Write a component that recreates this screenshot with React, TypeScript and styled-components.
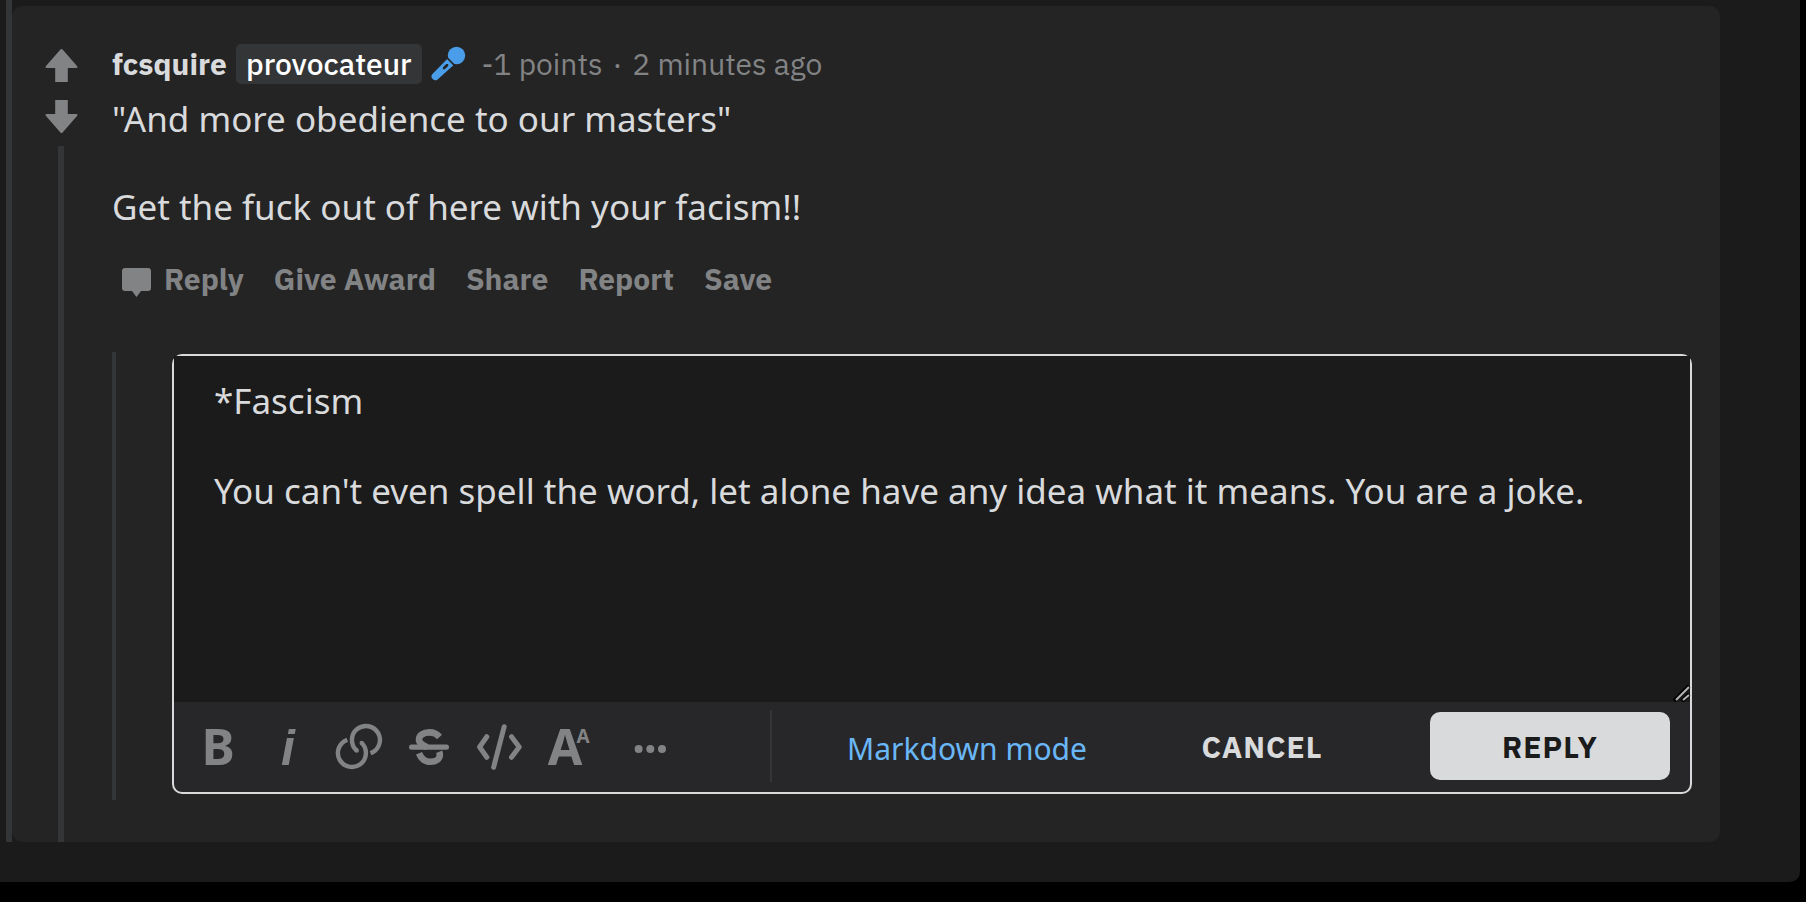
import React from 'react';
import styled, { createGlobalStyle } from 'styled-components';

const UI_FONT = '"IBM Plex Sans", Roboto, "Liberation Sans", sans-serif';
const BODY_FONT = '"Noto Sans", "Open Sans", sans-serif';

const color = {
  surface: '#1b1b1b',
  card: '#242424',
  toolbar: '#272729',
  line: '#343537',
  text: '#d9dadc',
  muted: '#828385',
  link: '#6ab7f7',
  mic: '#4a9de8',
};

const GlobalStyle = createGlobalStyle`
  * { box-sizing: border-box; }
  body { margin: 0; background: #000; color: ${color.text}; }
  button { border: 0; margin: 0; padding: 0; background: none; color: inherit; cursor: pointer; }
  svg { display: block; flex: none; overflow: visible; }
`;

const Page = styled.div`
  min-height: 100vh;
  padding: 0 6px 20px 0;
  background: #000;
`;

const Surface = styled.main`
  display: flex;
  padding: 0 80px 40px 6px;
  border-radius: 0 0 10px 0;
  background: ${color.surface};
`;

const ParentLine = styled.div`
  flex: none;
  width: 6px;
  background: ${color.line};
`;

const Comment = styled.article`
  display: flex;
  flex: 1;
  min-width: 0;
  gap: 33px;
  margin-top: 6px;
  padding: 0 28px 0 33px;
  border-radius: 10px;
  background: ${color.card};
`;

const VoteColumn = styled.div`
  display: flex;
  flex: none;
  flex-direction: column;
  align-items: center;
  gap: 18px;
  width: 34px;
  padding-top: 43px;
`;

const VoteButton = styled.button`
  color: ${color.muted};
`;

const ThreadLine = styled.div`
  flex: 1;
  width: 6px;
  margin-top: -5px;
  margin-right: 2px;
  background: ${color.line};
`;

const Content = styled.div`
  flex: 1;
  min-width: 0;
  padding: 38px 0 42px;
`;

const Header = styled.header`
  display: flex;
  align-items: center;
  gap: 9px;
  font: 400 30px/40px ${UI_FONT};
`;

const Author = styled.a`
  color: ${color.text};
  font-weight: 700;
  text-decoration: none;
`;

const Flair = styled.span`
  padding: 0 10px;
  border-radius: 5px;
  background: ${color.line};
  color: #fff;
  font-weight: 500;
`;

const Meta = styled.div`
  display: flex;
  gap: 10px;
  margin-left: 6px;
  color: ${color.muted};
`;

const Body = styled.div`
  display: flex;
  flex-direction: column;
  gap: 36px;
  margin-top: 9px;
  font: 400 35px/52px ${BODY_FONT};
`;

const Paragraph = styled.p`
  margin: 0;
`;

const Actions = styled.div`
  display: flex;
  flex-wrap: wrap;
  gap: 30px;
  margin-top: 26px;
  padding-left: 10px;
`;

const ActionButton = styled.button`
  display: flex;
  align-items: center;
  gap: 12px;
  color: ${color.muted};
  font: 700 30px/40px ${UI_FONT};
`;

const CommentGlyph = styled.svg`
  margin-top: 5px;
`;

const ReplyThread = styled.div`
  display: flex;
  gap: 56px;
  margin-top: 53px;
`;

const ReplyLine = styled.div`
  flex: none;
  width: 4px;
  background: ${color.line};
`;

const Editor = styled.form`
  flex: 1;
  min-width: 0;
  margin: 2px 0 6px;
  border: 2px solid ${color.text};
  border-radius: 10px;
  background: ${color.toolbar};
`;

const InputArea = styled.div`
  position: relative;
`;

const TextInput = styled.textarea`
  display: block;
  width: 100%;
  height: 346px;
  padding: 22px 40px;
  border: 0;
  outline: 0;
  resize: none;
  background: ${color.surface};
  color: ${color.text};
  font: 400 35px/45px ${BODY_FONT};
`;

const ResizeGrip = styled.svg`
  position: absolute;
  right: 0;
  bottom: 0;
`;

const Toolbar = styled.div`
  display: flex;
  align-items: center;
  justify-content: space-between;
  height: 90px;
  padding: 0 20px 2px 10px;
`;

const Tools = styled.div`
  display: flex;
`;

const ToolButton = styled.button<{ $spaced?: boolean }>`
  display: flex;
  align-items: center;
  justify-content: center;
  width: 70px;
  height: 68px;
  margin-left: ${(p) => (p.$spaced ? 11 : 0)}px;
  color: ${color.muted};
`;

const Submit = styled.div`
  display: flex;
  align-items: center;
`;

const Divider = styled.div`
  width: 2px;
  height: 72px;
  margin-right: 75px;
  background: ${color.line};
`;

const ModeButton = styled.button`
  padding-top: 6px;
  color: ${color.link};
  font: 400 30px/40px ${BODY_FONT};
`;

const FormButton = styled.button<{ $primary?: boolean }>`
  width: ${(p) => (p.$primary ? 240 : 200)}px;
  height: 68px;
  margin-left: ${(p) => (p.$primary ? 68 : 75)}px;
  padding-top: 2px;
  border-radius: 10px;
  background: ${(p) => (p.$primary ? color.text : 'transparent')};
  color: ${(p) => (p.$primary ? color.surface : color.text)};
  font: 700 30px/40px ${UI_FONT};
  letter-spacing: 1px;
`;

const VoteArrow = ({ down = false }: { down?: boolean }) => (
  <svg width="34" height="33" viewBox="0 0 34 33" fill="currentColor" aria-hidden="true">
    <path
      transform={down ? 'rotate(180 16.5 16.5)' : undefined}
      d="M15.4.5Q16.5-.5 17.6.5L32.2 17.3Q33.2 19 31.5 19H22.8V33H10.2V19H1.5Q-.2 19 .8 17.3Z"
    />
  </svg>
);

const MicIcon = () => (
  <svg width="36" height="36" viewBox="0 0 36 36" fill={color.mic} aria-label="Microphone" role="img">
    <circle cx="25.5" cy="9.5" r="8.7" />
    <path
      fillRule="evenodd"
      d="M16.2 13L22.4 19.2L6.6 33.4A3.8 3.8 0 0 1 1.2 28.2ZM12 21.2L11.8 23.2L13.8 23.2L17.2 20L17.2 18L15.2 18Z"
    />
    <path d="M16.5 12.2L23.5 19.2" stroke={color.card} strokeWidth="1.6" />
  </svg>
);

const CommentIcon = () => (
  <CommentGlyph width="30" height="30" viewBox="0 0 30 30" fill="currentColor" aria-hidden="true">
    <path d="M3 1H26Q29 1 29 4V21Q29 24 26 24H19L14.5 30L10 24H3Q0 24 0 21V4Q0 1 3 1Z" />
  </CommentGlyph>
);

const Icon = ({ children }: { children: React.ReactNode }) => (
  <svg width="50" height="50" viewBox="0 0 50 50" fill="currentColor" aria-hidden="true">
    {children}
  </svg>
);

const IconGlyph = styled.text`
  font-family: "Noto Sans", sans-serif;
  font-weight: 700;
  font-size: 50px;
  text-anchor: middle;
`;

const ItalicGlyph = styled(IconGlyph)`
  font-family: "Liberation Sans", sans-serif;
  font-style: italic;
`;

const SmallGlyph = styled(IconGlyph)`
  font-size: 19px;
`;

const BoldIcon = () => (
  <Icon>
    <IconGlyph x="24" y="44">B</IconGlyph>
  </Icon>
);

const ItalicIcon = () => (
  <Icon>
    <ItalicGlyph x="24" y="44">i</ItalicGlyph>
  </Icon>
);

const LinkIcon = () => (
  <Icon>
    <g fill="none" stroke="currentColor" strokeWidth="4.4">
      <path d="M27.7 22A14 14 0 1 1 13.3 18.8" />
      <path d="M22.7 29.5A14 14 0 1 1 36.5 32.2" />
    </g>
    <circle cx="27.7" cy="22" r="2.2" />
    <circle cx="22.7" cy="29.5" r="2.2" />
  </Icon>
);

const StrikeIcon = () => (
  <Icon>
    <g fill="none" stroke="currentColor" strokeWidth="6.6">
      <path d="M35.5 16C32.5 12.5 29.5 11.4 25.5 11.4C19 11.4 15 14.5 15 18.5C15 22.5 19 24.3 23 26.2" />
      <path d="M15 32.2C17.4 38 21.5 40.8 26.3 40.8C32 40.8 35.8 38 35.8 34C35.8 32.6 35.6 31.8 35.2 30.8" />
    </g>
    <rect x="5" y="23.6" width="40" height="5.2" rx="2.4" />
  </Icon>
);

const CodeIcon = () => (
  <Icon>
    <path
      fill="none"
      stroke="currentColor"
      strokeWidth="5"
      strokeLinecap="round"
      strokeLinejoin="round"
      d="M12.8 15.7L5.6 26L12.8 36.3M37.5 15.7L45.2 26L37.5 36.3M30.2 5.7L19.6 46.3"
    />
  </Icon>
);

const HeadingIcon = () => (
  <Icon>
    <IconGlyph x="21" y="44">A</IconGlyph>
    <SmallGlyph x="39" y="22">A</SmallGlyph>
  </Icon>
);

const MoreIcon = () => (
  <Icon>
    <circle cx="13.6" cy="28" r="4" />
    <circle cx="25.3" cy="28" r="4" />
    <circle cx="37" cy="28" r="4" />
  </Icon>
);

const tools = [
  { label: 'Bold', Glyph: BoldIcon },
  { label: 'Italics', Glyph: ItalicIcon },
  { label: 'Link', Glyph: LinkIcon },
  { label: 'Strikethrough', Glyph: StrikeIcon },
  { label: 'Inline code', Glyph: CodeIcon },
  { label: 'Heading', Glyph: HeadingIcon },
  { label: 'More', Glyph: MoreIcon, spaced: true },
];

const draft =
  "*Fascism\n\nYou can't even spell the word, let alone have any idea what it means. You are a joke.";

export default function App() {
  return (
    <Page>
      <GlobalStyle />
      <Surface>
        <ParentLine />
        <Comment>
          <VoteColumn>
            <VoteButton aria-label="Upvote"><VoteArrow /></VoteButton>
            <VoteButton aria-label="Downvote"><VoteArrow down /></VoteButton>
            <ThreadLine />
          </VoteColumn>
          <Content>
            <Header>
              <Author href="#">fcsquire</Author>
              <Flair>provocateur</Flair>
              <MicIcon />
              <Meta>
                <span>-1 points</span>
                <span>·</span>
                <span>2 minutes ago</span>
              </Meta>
            </Header>
            <Body>
              <Paragraph>"And more obedience to our masters"</Paragraph>
              <Paragraph>Get the fuck out of here with your facism!!</Paragraph>
            </Body>
            <Actions>
              <ActionButton><CommentIcon />Reply</ActionButton>
              <ActionButton>Give Award</ActionButton>
              <ActionButton>Share</ActionButton>
              <ActionButton>Report</ActionButton>
              <ActionButton>Save</ActionButton>
            </Actions>
            <ReplyThread>
              <ReplyLine />
              <Editor onSubmit={(e) => e.preventDefault()}>
                <InputArea>
                  <TextInput aria-label="Reply text" defaultValue={draft} />
                  <ResizeGrip width="18" height="18" viewBox="0 0 18 18" aria-hidden="true">
                    <path d="M2 17L17 2M10 17L17 10" stroke="#000" strokeWidth="4" />
                    <path d="M4 16L17 3M11 16L17 11" stroke="#b4b4b4" strokeWidth="2" />
                  </ResizeGrip>
                </InputArea>
                <Toolbar>
                  <Tools>
                    {tools.map(({ label, Glyph, spaced }) => (
                      <ToolButton key={label} type="button" aria-label={label} $spaced={spaced}>
                        <Glyph />
                      </ToolButton>
                    ))}
                  </Tools>
                  <Submit>
                    <Divider />
                    <ModeButton type="button">Markdown mode</ModeButton>
                    <FormButton type="button">CANCEL</FormButton>
                    <FormButton type="submit" $primary>REPLY</FormButton>
                  </Submit>
                </Toolbar>
              </Editor>
            </ReplyThread>
          </Content>
        </Comment>
      </Surface>
    </Page>
  );
}
